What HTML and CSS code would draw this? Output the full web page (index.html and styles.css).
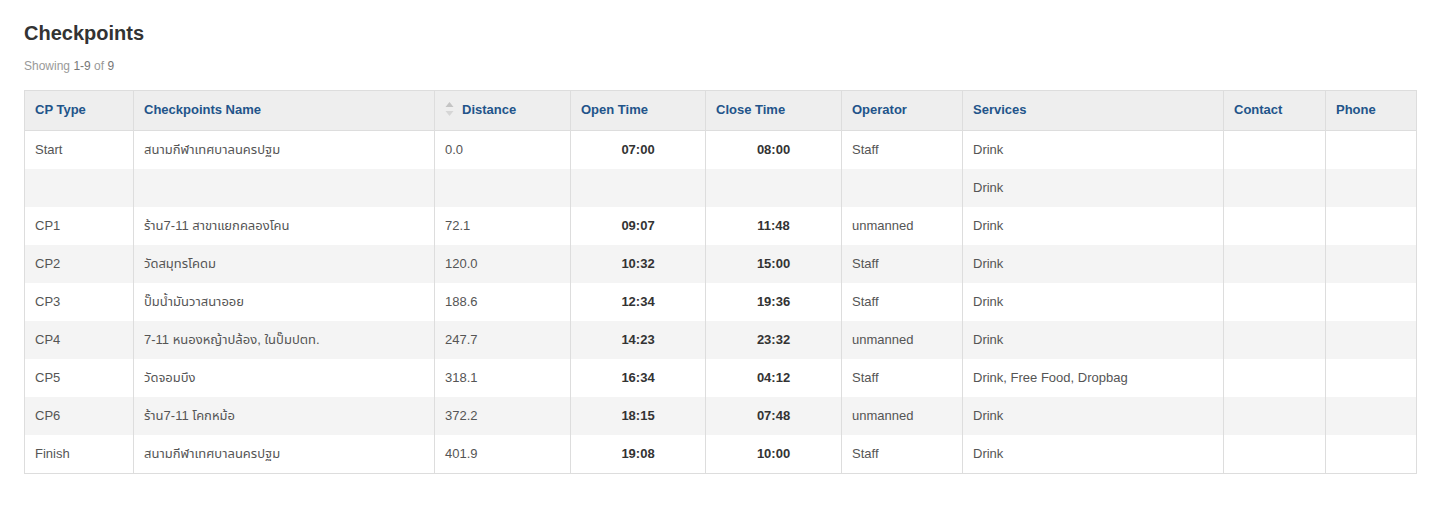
FILE: index.html
```html
<!DOCTYPE html>
<html lang="th">
<head>
<meta charset="utf-8">
<title>Checkpoints</title>
<link rel="stylesheet" href="styles.css">
</head>
<body>
<div class="page">
  <h2 class="title">Checkpoints</h2>
  <div class="summary">Showing <b>1-9</b> of <b>9</b></div>
  <table class="grid">
    <colgroup>
      <col class="c1"><col class="c2"><col class="c3"><col class="c4"><col class="c5"><col class="c6"><col class="c7"><col class="c8"><col class="c9">
    </colgroup>
    <thead>
      <tr>
        <th>CP Type</th>
        <th>Checkpoints Name</th>
        <th><span class="sort"><svg width="9" height="16" viewBox="0 0 9 16"><path d="M0.5 6 L4.5 1 L8.5 6 Z" fill="#c4c4c4"/><path d="M0.5 10 L4.5 15 L8.5 10 Z" fill="#d6d6d6"/></svg></span>Distance</th>
        <th>Open Time</th>
        <th>Close Time</th>
        <th>Operator</th>
        <th>Services</th>
        <th>Contact</th>
        <th>Phone</th>
      </tr>
    </thead>
    <tbody>
      <tr><td>Start</td><td>สนามกีฬาเทศบาลนครปฐม</td><td>0.0</td><td class="t">07:00</td><td class="t">08:00</td><td>Staff</td><td>Drink</td><td></td><td></td></tr>
      <tr><td></td><td></td><td></td><td class="t"></td><td class="t"></td><td></td><td>Drink</td><td></td><td></td></tr>
      <tr><td>CP1</td><td>ร้าน7-11 สาขาแยกคลองโคน</td><td>72.1</td><td class="t">09:07</td><td class="t">11:48</td><td>unmanned</td><td>Drink</td><td></td><td></td></tr>
      <tr><td>CP2</td><td>วัดสมุทรโคดม</td><td>120.0</td><td class="t">10:32</td><td class="t">15:00</td><td>Staff</td><td>Drink</td><td></td><td></td></tr>
      <tr><td>CP3</td><td>ปั๊มน้ำมันวาสนาออย</td><td>188.6</td><td class="t">12:34</td><td class="t">19:36</td><td>Staff</td><td>Drink</td><td></td><td></td></tr>
      <tr><td>CP4</td><td>7-11 หนองหญ้าปล้อง, ในปั๊มปตท.</td><td>247.7</td><td class="t">14:23</td><td class="t">23:32</td><td>unmanned</td><td>Drink</td><td></td><td></td></tr>
      <tr><td>CP5</td><td>วัดจอมบึง</td><td>318.1</td><td class="t">16:34</td><td class="t">04:12</td><td>Staff</td><td>Drink, Free Food, Dropbag</td><td></td><td></td></tr>
      <tr><td>CP6</td><td>ร้าน7-11 โคกหม้อ</td><td>372.2</td><td class="t">18:15</td><td class="t">07:48</td><td>unmanned</td><td>Drink</td><td></td><td></td></tr>
      <tr><td>Finish</td><td>สนามกีฬาเทศบาลนครปฐม</td><td>401.9</td><td class="t">19:08</td><td class="t">10:00</td><td>Staff</td><td>Drink</td><td></td><td></td></tr>
    </tbody>
  </table>
</div>
</body>
</html>
```

FILE: styles.css
```css
html, body {
  margin: 0;
  padding: 0;
  background: #fff;
}
body {
  font-family: "Liberation Sans", Arial, "Noto Sans", sans-serif;
  font-size: 13px;
  color: #555;
}
.page {
  padding: 20px 24px 0 24px;
}
.title {
  margin: 0;
  font-size: 20px;
  line-height: 26px;
  font-weight: bold;
  color: #333;
}
.summary {
  margin-top: 13px;
  font-size: 12px;
  line-height: 14px;
  color: #999;
}
.summary b {
  font-weight: normal;
  color: #777;
}
.grid {
  margin-top: 17px;
  width: 1392px;
  border-collapse: collapse;
  table-layout: fixed;
  border: 1px solid #ddd;
  font-size: 13px;
}
.c1 { width: 109px; }
.c2 { width: 301px; }
.c3 { width: 136px; }
.c4 { width: 135px; }
.c5 { width: 136px; }
.c6 { width: 121px; }
.c7 { width: 261px; }
.c8 { width: 102px; }
.c9 { width: 91px; }
.grid th {
  background: #eee;
  color: #22548a;
  font-weight: bold;
  text-align: left;
  padding: 9px 10px 10px 10px;
  line-height: 20px;
  border-left: 1px solid #ddd;
  border-bottom: 1px solid #ddd;
}
.grid td {
  padding: 9px 10px;
  line-height: 20px;
  height: 20px;
  border-left: 1px solid #ddd;
  font-family: "Liberation Sans", Arial, "Noto Sans", "Noto Sans Thai", sans-serif;
}
.grid tbody tr:nth-child(even) td {
  background: #f4f4f4;
}
.grid td.t {
  text-align: center;
  font-weight: bold;
  color: #333;
}
.sort {
  display: inline-block;
  vertical-align: -3px;
  margin-right: 8px;
}
.sort svg {
  display: block;
}
```
